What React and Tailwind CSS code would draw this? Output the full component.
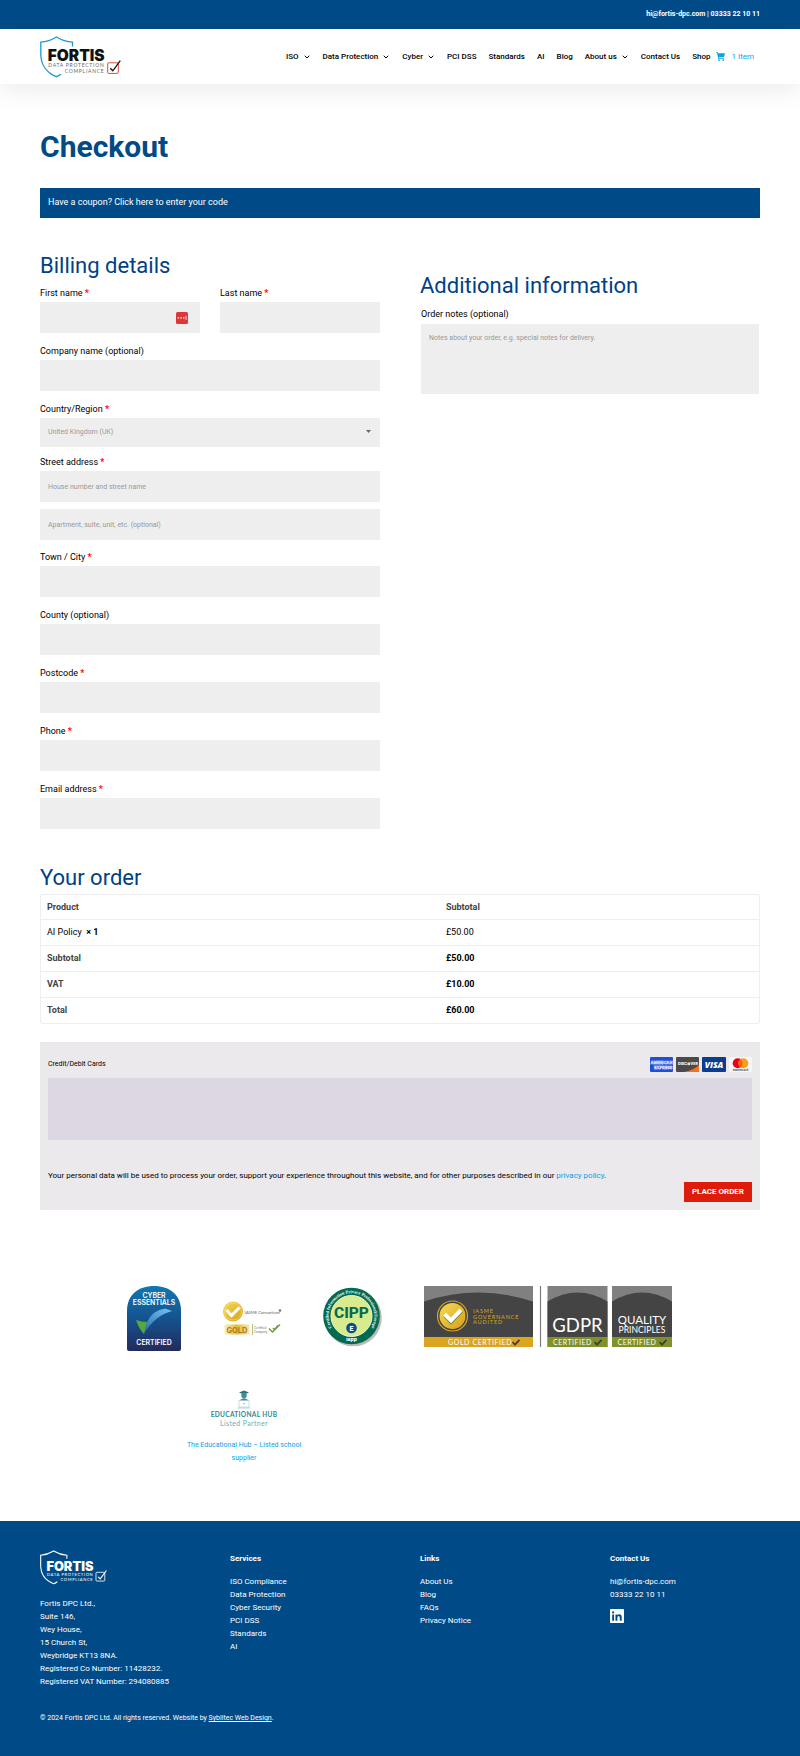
import React from "react";
import { ChevronDown } from "lucide-react";

const NAV = [
  { label: "ISO", menu: true },
  { label: "Data Protection", menu: true },
  { label: "Cyber", menu: true },
  { label: "PCI DSS" },
  { label: "Standards" },
  { label: "AI" },
  { label: "Blog" },
  { label: "About us", menu: true },
  { label: "Contact Us" },
  { label: "Shop" },
];

function FortisLogo({ className, shield, title, sub, box, tick }) {
  return (
    <svg className={className} viewBox="0 0 81 42" role="img" aria-label="Fortis Data Protection Compliance">
      <path
        d="M32.5 10.5V6.2C27 5.8 21.500 4 16.500 1C11.500 4 6 5.800 .8 6.200V18C.8 29 7 37 16.500 40.600C18 40 19.500 39.200 21 38.200"
        fill="none"
        stroke={shield}
        strokeWidth="1.300"
      />
      <text x="7.800" y="25" fontFamily="Inter, sans-serif" fontWeight="900" fontSize="15.500" fill={title}>
        FORTIS
      </text>
      <g fontFamily="Lato, sans-serif" fontSize="5" fill={sub}>
        <text x="64.500" y="31.300" textAnchor="end" letterSpacing=".75">DATA PROTECTION</text>
        <text x="64.500" y="37.200" textAnchor="end" letterSpacing=".75">COMPLIANCE</text>
      </g>
      <rect x="67.700" y="26.800" width="10.600" height="10.600" rx="1" fill="none" stroke={box} strokeWidth="1" />
      <path d="M70.300 32.200L72.800 34.800L80.300 24.600" fill="none" stroke={tick} strokeWidth="1.300" />
    </svg>
  );
}

function Cart() {
  return (
    <svg className="h-[9px] w-[9px]" viewBox="0 0 18 18" fill="#0c9fe8" aria-hidden="true">
      <path d="M0 0H3L4 2.500H18L16 10.500H5.600L6 12.300H16V14H4.500L2 1.700H0Z" />
      <circle cx="6" cy="16.200" r="1.800" />
      <circle cx="14.500" cy="16.200" r="1.800" />
    </svg>
  );
}

const INPUT =
  "block w-full bg-[#eeeeee] px-2 text-[7px] text-[#999999] placeholder:text-[#999999] rounded-none outline-none";

function Field({ id, label, required, placeholder, children, className = "mb-2" }) {
  return (
    <div className={className}>
      <label htmlFor={id} className="block h-[19px] text-[9px] leading-[21px]">
        {label}
        {required && <span className="font-bold text-[#ff0000]"> *</span>}
      </label>
      {children || <input id={id} type="text" placeholder={placeholder} className={INPUT + " h-[31px]"} />}
    </div>
  );
}

function CardLogos() {
  return (
    <div className="flex gap-[3px]">
      <svg className="h-[15px] w-[23px]" viewBox="0 0 23 15" role="img" aria-label="American Express">
        <rect width="23" height="15" rx="1" fill="#1f4fd8" />
        <g fontFamily="Inter, sans-serif" fontWeight="800" fill="none" stroke="#fff" strokeWidth=".35">
          <text x=".4" y="7" fontSize="4">AMERICAN</text>
          <text x="4" y="11.700" fontSize="4">EXPRESS</text>
        </g>
      </svg>
      <svg className="h-[15px] w-[23px]" viewBox="0 0 23 15" role="img" aria-label="Discover">
        <rect width="23" height="15" rx="1" fill="#4a4a4a" />
        <path d="M8 15Q18 13 23 8V14Q23 15 22 15Z" fill="#f2711c" />
        <text x="2" y="8" fontFamily="Inter, sans-serif" fontWeight="800" fontSize="3.700" fill="#fff">DISC</text>
        <circle cx="12.700" cy="6.700" r="1.500" fill="#f9d9c0" />
        <text x="14.300" y="8" fontFamily="Inter, sans-serif" fontWeight="800" fontSize="3.700" fill="#fff">VER</text>
      </svg>
      <svg className="h-[15px] w-[24px]" viewBox="0 0 24 15" role="img" aria-label="Visa">
        <rect width="24" height="15" rx="1" fill="#0a3c8f" />
        <text x="12" y="11" textAnchor="middle" fontFamily="Open Sans, sans-serif" fontWeight="800" fontStyle="italic" fontSize="8.500" fill="#fff">VISA</text>
      </svg>
      <svg className="h-[15px] w-[23px]" viewBox="0 0 23 15" role="img" aria-label="Mastercard">
        <rect width="23" height="15" rx="1" fill="#f7f5f7" />
        <circle cx="8.700" cy="6.300" r="5" fill="#eb001b" />
        <circle cx="14.300" cy="6.300" r="5" fill="#f79e1b" />
        <path d="M11.500 2.200A5 5 0 0 1 11.500 10.400A5 5 0 0 1 11.500 2.200Z" fill="#ff5f00" />
        <text x="11.500" y="14" textAnchor="middle" fontFamily="Inter, sans-serif" fontWeight="600" fontSize="2.800" fill="#333">mastercard</text>
      </svg>
    </div>
  );
}

function CyberEssentials() {
  return (
    <svg className="h-[66px] w-[54px]" viewBox="0 0 54 66" role="img" aria-label="Cyber Essentials Certified">
      <defs>
        <linearGradient id="ce" x1="0" y1="0" x2="0" y2="1">
          <stop offset="0" stopColor="#1277b0" />
          <stop offset=".5" stopColor="#15538f" />
          <stop offset="1" stopColor="#232a5c" />
        </linearGradient>
        <linearGradient id="ceTick" x1="0" y1="1" x2="1" y2="0">
          <stop offset="0" stopColor="#2470ad" />
          <stop offset="1" stopColor="#79c4f2" />
        </linearGradient>
      </defs>
      <path d="M0 25C0 9 11 0 27 0S54 9 54 25V63Q54 65 52 65H2Q0 65 0 63Z" fill="url(#ce)" />
      <g fontFamily="Inter, sans-serif" fontWeight="600" fill="#fff" textAnchor="middle">
        <text x="27" y="12.300" fontSize="6.900">CYBER</text>
        <text x="27" y="18.700" fontSize="6.900">ESSENTIALS</text>
        <text x="27" y="58.700" fontSize="6.900">CERTIFIED</text>
      </g>
      <path d="M9 34Q15 36 20 36L17 48Q12 43 9 34Z" fill="#58a83c" />
      <path d="M17 48Q27 30 45 25L38 22.500Q26 24 20 36Z" fill="url(#ceTick)" />
    </svg>
  );
}

function IasmeConsortium() {
  return (
    <svg className="h-[36px] w-[60px]" viewBox="0 0 60 36" role="img" aria-label="IASME Consortium Gold Certified Company">
      <defs>
        <linearGradient id="gold" x1="0" y1="0" x2="1" y2="1">
          <stop offset="0" stopColor="#f5dc55" />
          <stop offset="1" stopColor="#d99e18" />
        </linearGradient>
        <linearGradient id="goldBar" x1="0" y1="0" x2="1" y2="0">
          <stop offset="0" stopColor="#f9efb8" />
          <stop offset=".5" stopColor="#e6bb33" />
          <stop offset="1" stopColor="#f6e9ae" />
        </linearGradient>
      </defs>
      <circle cx="11" cy="10.500" r="10" fill="url(#gold)" />
      <circle cx="11" cy="10.500" r="8.500" fill="none" stroke="#f9e892" strokeWidth=".5" />
      <path d="M4.500 9L9.500 14.500L17.500 6.500" fill="none" stroke="#fff" strokeWidth="3" />
      <text x="22.500" y="13.300" fontFamily="Lato, sans-serif" fontSize="4.200" fill="#666">IASME Consortium</text>
      <circle cx="58" cy="9.500" r="1.300" fill="#777" />
      <rect x="2.500" y="23.500" width="25" height="10" fill="url(#goldBar)" />
      <text x="15" y="31.600" textAnchor="middle" fontFamily="Inter, sans-serif" fontWeight="700" fontSize="7.500" fill="#a7801b">GOLD</text>
      <path d="M30.500 23V34" stroke="#8bab4a" strokeWidth=".7" />
      <text x="32" y="27.800" fontFamily="Lato, sans-serif" fontSize="3.200" fill="#777">Certified</text>
      <text x="32" y="32" fontFamily="Lato, sans-serif" fontSize="3.200" fill="#777">Company</text>
      <path d="M47 27.500L50.500 31L58 23.500M51 27L52.500 28.500L56 24.500" fill="none" stroke="#6c9a3a" strokeWidth="1.400" />
    </svg>
  );
}

function Cipp() {
  return (
    <svg className="h-[60px] w-[60px]" viewBox="0 0 60 60" role="img" aria-label="CIPP/E certified by iapp">
      <defs>
        <path id="cippArc" d="M11.600 44.500A22.900 22.900 0 1 1 45.400 44.500" />
      </defs>
      <circle cx="30.300" cy="30.800" r="28.500" fill="#bbbbbb" />
      <circle cx="28.500" cy="29" r="28.300" fill="#056b50" />
      <circle cx="28.500" cy="29" r="20.500" fill="#d8ec8e" stroke="#eef6cf" strokeWidth="1" />
      <text fontFamily="Liberation Serif, serif" fontWeight="700" fontSize="4.400" fill="#fff">
        <textPath href="#cippArc" startOffset="50%" textAnchor="middle">Certified Information Privacy Professional/Europe</textPath>
      </text>
      <text x="28.500" y="31" textAnchor="middle" fontFamily="Roboto, sans-serif" fontWeight="800" fontSize="15.500" fill="#056b50">CIPP</text>
      <circle cx="28.500" cy="41" r="5.300" fill="#0c4a94" />
      <text x="28.500" y="43.500" textAnchor="middle" fontFamily="Roboto, sans-serif" fontWeight="800" fontSize="7" fill="#fff">E</text>
      <text x="28.500" y="54.400" textAnchor="middle" fontFamily="Inter, sans-serif" fontWeight="800" fontSize="5" fill="#fff">iapp</text>
    </svg>
  );
}

function Tick({ x, y }) {
  return <path d={`M${x} ${y}l2.500 2.700l4.500 -4.800`} fill="none" stroke="#3d3d3d" strokeWidth="1.700" />;
}

function Governance() {
  return (
    <svg className="h-[61px] w-[248px]" viewBox="0 0 248 61" role="img" aria-label="IASME Governance audited, GDPR and Quality Principles certified">
      <rect width="109" height="61" fill="#808080" />
      <path d="M0 15.500Q54.500 -2.500 109 15.500V51H0Z" fill="#444" />
      <rect y="51" width="109" height="10" fill="#dba520" />
      <circle cx="28.500" cy="30" r="15" fill="none" stroke="#dba520" strokeWidth="1.200" />
      <circle cx="28.500" cy="30" r="13" fill="url(#gold)" />
      <path d="M21 29L27 35.500L37.500 24.500" fill="none" stroke="#6f8a2a" strokeWidth="4.500" />
      <path d="M20.500 28L27 34.500L37 24" fill="none" stroke="#fff" strokeWidth="4" />
      <g fontFamily="Lato, sans-serif" fontWeight="400" fontSize="5.600" letterSpacing=".8" fill="#dba520">
        <text x="49" y="27">IASME</text>
        <text x="49" y="32.700">GOVERNANCE</text>
        <text x="49" y="38.400">AUDITED</text>
      </g>
      <text x="24" y="58.500" fontFamily="Lato, sans-serif" fontSize="7" letterSpacing=".6" fill="#fff">GOLD CERTIFIED</text>
      <Tick x="88.500" y="56" />
      <path d="M116.500 0V61" stroke="#7d7d7d" strokeWidth="1.200" />
      <rect x="123.500" width="60" height="61" fill="#808080" />
      <path d="M123.500 15.500Q153.500 -2.500 183.500 15.500V51H123.500Z" fill="#444" />
      <rect x="123.500" y="51" width="60" height="10" fill="#7f9129" />
      <text x="153.500" y="46" textAnchor="middle" fontFamily="Lato, sans-serif" fontSize="18.500" fill="#fff">GDPR</text>
      <text x="129" y="58.500" fontFamily="Lato, sans-serif" fontSize="7" letterSpacing=".5" fill="#fff">CERTIFIED</text>
      <Tick x="170.500" y="56" />
      <rect x="188" width="60" height="61" fill="#808080" />
      <path d="M188 15.500Q218 -2.500 248 15.500V51H188Z" fill="#444" />
      <rect x="188" y="51" width="60" height="10" fill="#7f9129" />
      <text x="218" y="37.500" textAnchor="middle" fontFamily="Lato, sans-serif" fontSize="11.500" fill="#fff">QUALITY</text>
      <text x="218" y="46.600" textAnchor="middle" fontFamily="Lato, sans-serif" fontSize="8.600" fill="#fff">PRINCIPLES</text>
      <text x="193.500" y="58.500" fontFamily="Lato, sans-serif" fontSize="7" letterSpacing=".5" fill="#fff">CERTIFIED</text>
      <Tick x="235.500" y="56" />
    </svg>
  );
}

function EducationalHub() {
  return (
    <svg className="h-[38px] w-[70px]" viewBox="-2 0 70 38" role="img" aria-label="Educational Hub Listed Partner">
      <path d="M28 2.500L33 .5L38 2.500L33 4.800Z" fill="#23787f" />
      <circle cx="33" cy="5.500" r="2.700" fill="#3c8f96" />
      <path d="M29 10Q33 6.500 37 10V11H29Z" fill="#3c8f96" />
      <rect x="28" y="10.500" width="10" height="6.500" fill="#fff" stroke="#9fc9cc" strokeWidth=".6" />
      <path d="M26.500 18H39.500" stroke="#9fc9cc" strokeWidth=".8" />
      <circle cx="33" cy="13.700" r=".6" fill="#3c8f96" />
      <text x="33" y="27.200" textAnchor="middle" fontFamily="Lato, sans-serif" fontWeight="700" fontSize="6.600" letterSpacing=".3" fill="#338a92">EDUCATIONAL HUB</text>
      <text x="33" y="36" textAnchor="middle" fontFamily="Lato, sans-serif" fontSize="6.900" letterSpacing=".4" fill="#6fabb0">Listed Partner</text>
    </svg>
  );
}

const ORDER = [
  { name: "Subtotal", value: "£50.00" },
  { name: "VAT", value: "£10.00" },
  { name: "Total", value: "£60.00" },
];

const ADDRESS = [
  "Fortis DPC Ltd.,",
  "Suite 146,",
  "Wey House,",
  "15 Church St,",
  "Weybridge KT13 8NA.",
  "Registered Co Number: 11428232.",
  "Registered VAT Number: 294080885",
];

function FooterColumn({ title, links, children }) {
  return (
    <div className="pt-[2px]">
      <h4 className="text-[8px] leading-[13px] font-bold">{title}</h4>
      <ul className="mt-[10px] text-[8px] leading-[13px]">
        {links.map((l) => (
          <li key={l}>
            <a href="#">{l}</a>
          </li>
        ))}
      </ul>
      {children}
    </div>
  );
}

export default function App() {
  return (
    <div className="bg-white font-['Roboto',sans-serif] text-[9px] text-black">
      <div className="flex h-[29px] items-center justify-end bg-[#004b87] px-10 text-[7px] font-bold text-white">
        hi@fortis-dpc.com | 03333 22 10 11
      </div>

      <header className="flex h-[55px] items-center justify-between bg-white px-10 shadow-[0_8px_24px_rgba(0,0,0,0.07)]">
        <a href="#" className="block">
          <FortisLogo className="h-[42px] w-[81px]" shield="#1c96d4" title="#111" sub="#666" box="#dd4a3f" tick="#111" />
        </a>
        <nav className="flex items-center gap-3 pr-[6px] text-[8px] font-medium whitespace-nowrap">
          {NAV.map((n) => (
            <a key={n.label} href="#" className="flex items-center gap-1">
              {n.label}
              {n.menu && <ChevronDown size={8} strokeWidth={3} />}
            </a>
          ))}
          <a href="#" className="-ml-[6px] flex items-center gap-[6px] font-normal text-[#0c9fe8]">
            <Cart />1 Item
          </a>
        </nav>
      </header>

      <main className="px-10">
        <h1 className="pt-12 text-[30px] leading-[30px] font-bold text-[#004b87]">Checkout</h1>
        <div className="mt-[26px] flex h-[30px] items-center bg-[#004b87] px-2 text-[9px] text-white">
          <a href="#">Have a coupon? Click here to enter your code</a>
        </div>

        <form>
          <div className="grid grid-cols-2 gap-10">
            <section className="pt-[37px]">
              <h2 className="text-[22px] leading-[22px] text-[#004185]">Billing details</h2>
              <div className="mt-[6px] grid grid-cols-2 gap-5">
                <Field id="first" label="First name" required>
                  <div className="relative">
                    <input id="first" type="text" className={INPUT + " h-[31px]"} />
                    <svg className="absolute top-[10px] right-3 h-3 w-3" viewBox="0 0 12 12" aria-hidden="true">
                      <rect width="12" height="12" rx="1.500" fill="#dc3838" />
                      <path d="M1.700 5.200H3.100V6.600H1.700ZM4.400 5.200H5.800V6.600H4.400ZM7.100 5.200H8.500V6.600H7.100ZM9.700 3.800H10.400V8H9.700Z" fill="#fff" />
                    </svg>
                  </div>
                </Field>
                <Field id="last" label="Last name" required />
              </div>
              <Field id="company" label="Company name (optional)" />
              <Field id="country" label="Country/Region" required className="mb-[5px]">
                <div className="relative">
                  <select id="country" className={INPUT + " h-[29px] appearance-none"}>
                    <option>United Kingdom (UK)</option>
                  </select>
                  <svg className="pointer-events-none absolute top-3 right-[9px] h-[3px] w-[5px]" viewBox="0 0 5 3" aria-hidden="true">
                    <path d="M0 0H5L2.500 3Z" fill="#666" />
                  </svg>
                </div>
              </Field>
              <Field id="street" label="Street address" required className="mb-[7px]" placeholder="House number and street name" />
              <input
                type="text"
                aria-label="Apartment, suite, unit, etc. (optional)"
                placeholder="Apartment, suite, unit, etc. (optional)"
                className={INPUT + " mb-[7px] h-[31px]"}
              />
              <Field id="town" label="Town / City" required />
              <Field id="county" label="County (optional)" />
              <Field id="postcode" label="Postcode" required />
              <Field id="phone" label="Phone" required />
              <Field id="email" label="Email address" required className="" />
            </section>

            <section className="pt-[57px]">
              <h2 className="text-[22px] leading-[22px] text-[#004185]">Additional information</h2>
              <div className="mt-2 px-px">
                <label htmlFor="notes" className="block text-[9px] leading-[19px]">
                  Order notes (optional)
                </label>
                <textarea
                  id="notes"
                  placeholder="Notes about your order, e.g. special notes for delivery."
                  className={INPUT + " h-[70px] resize-none pt-2 leading-[12px]"}
                />
              </div>
            </section>
          </div>

          <h2 className="mt-[38px] text-[22px] leading-[22px] text-[#004185]">Your order</h2>
          <table className="mt-[5px] w-full border-separate border-spacing-0 rounded-[2px] border border-[#eeeeee] text-left text-[9px] leading-[13px]">
            <thead>
              <tr className="text-[#444444]">
                <th className="h-6 w-5/9 px-[6px] py-0 font-bold">Product</th>
                <th className="h-6 px-[6px] py-0 font-bold">Subtotal</th>
              </tr>
            </thead>
            <tbody>
              <tr>
                <td className="h-[26px] border-t border-[#eeeeee] px-[6px] py-0">
                  AI Policy&nbsp; <strong>× 1</strong>
                </td>
                <td className="h-[26px] border-t border-[#eeeeee] px-[6px] py-0">£50.00</td>
              </tr>
              {ORDER.map((r) => (
                <tr key={r.name}>
                  <th className="h-[26px] border-t border-[#eeeeee] px-[6px] py-0 font-bold text-[#444444]">{r.name}</th>
                  <td className="h-[26px] border-t border-[#eeeeee] px-[6px] py-0 font-bold">{r.value}</td>
                </tr>
              ))}
            </tbody>
          </table>

          <section className="mt-[18px] bg-[#ebe9eb] p-2">
            <div className="flex h-7 items-center justify-between text-[7px]">
              <span>Credit/Debit Cards</span>
              <CardLogos />
            </div>
            <div className="h-[62px] rounded-[1px] bg-[#dcd7e3]" />
            <p className="mt-[30px] text-[8px] leading-[12px]">
              Your personal data will be used to process your order, support your experience throughout this website, and for
              other purposes described in our{" "}
              <a href="#" className="text-[#0c9fe8]">
                privacy policy
              </a>
              .
            </p>
            <div className="flex justify-end">
              <button type="submit" className="h-5 bg-[#dd1c0b] px-2 text-[8px] font-bold text-white">
                PLACE ORDER
              </button>
            </div>
          </section>
        </form>

        <section className="mt-[76px] flex px-[87px]">
          <CyberEssentials />
          <div className="ml-[41px] pt-[15px]">
            <IasmeConsortium />
          </div>
          <div className="ml-[41px] pt-px">
            <Cipp />
          </div>
          <div className="ml-[41px]">
            <Governance />
          </div>
        </section>
        <section className="ml-[132px] flex w-36 flex-col items-center pt-[38px] text-center">
          <EducationalHub />
          <a href="#" className="mt-[11px] text-[7px] leading-[13px] text-[#0c9fe8]">
            The Educational Hub – Listed school
            <br />
            supplier
          </a>
        </section>
      </main>

      <footer className="mt-14 bg-[#004b87] px-10 pt-[29px] pb-[34px] text-white">
        <div className="grid grid-cols-4 gap-10">
          <div>
            <FortisLogo className="h-[35px] w-[67px]" shield="#fff" title="#fff" sub="#fff" box="#fff" tick="#fff" />
            <address className="mt-3 text-[8px] leading-[13px] whitespace-nowrap not-italic">
              {ADDRESS.map((l) => (
                <div key={l}>{l}</div>
              ))}
            </address>
          </div>
          <FooterColumn
            title="Services"
            links={["ISO Compliance", "Data Protection", "Cyber Security", "PCI DSS", "Standards", "AI"]}
          />
          <FooterColumn title="Links" links={["About Us", "Blog", "FAQs", "Privacy Notice"]} />
          <FooterColumn title="Contact Us" links={["hi@fortis-dpc.com", "03333 22 10 11"]}>
            <a href="#" aria-label="LinkedIn" className="mt-2 block">
              <svg className="h-[14px] w-[14px]" viewBox="0 0 14 14" aria-hidden="true">
                <rect width="14" height="14" rx=".7" fill="#fff" />
                <path d="M2.200 5.400H4.100V11.700H2.200ZM5.500 5.400H7.300V6.300Q8 5.200 9.300 5.200Q11.700 5.200 11.700 8V11.700H9.800V8.400Q9.800 6.900 8.700 6.900Q7.400 6.900 7.400 8.500V11.700H5.500Z" fill="#004b87" />
                <circle cx="3.150" cy="3.400" r="1.100" fill="#004b87" />
              </svg>
            </a>
          </FooterColumn>
        </div>
        <p className="mt-6 text-[7px] leading-[13px]">
          © 2024 Fortis DPC Ltd. All rights reserved. Website by{" "}
          <a href="#" className="underline">
            Sybiltec Web Design
          </a>
          .
        </p>
      </footer>
    </div>
  );
}
